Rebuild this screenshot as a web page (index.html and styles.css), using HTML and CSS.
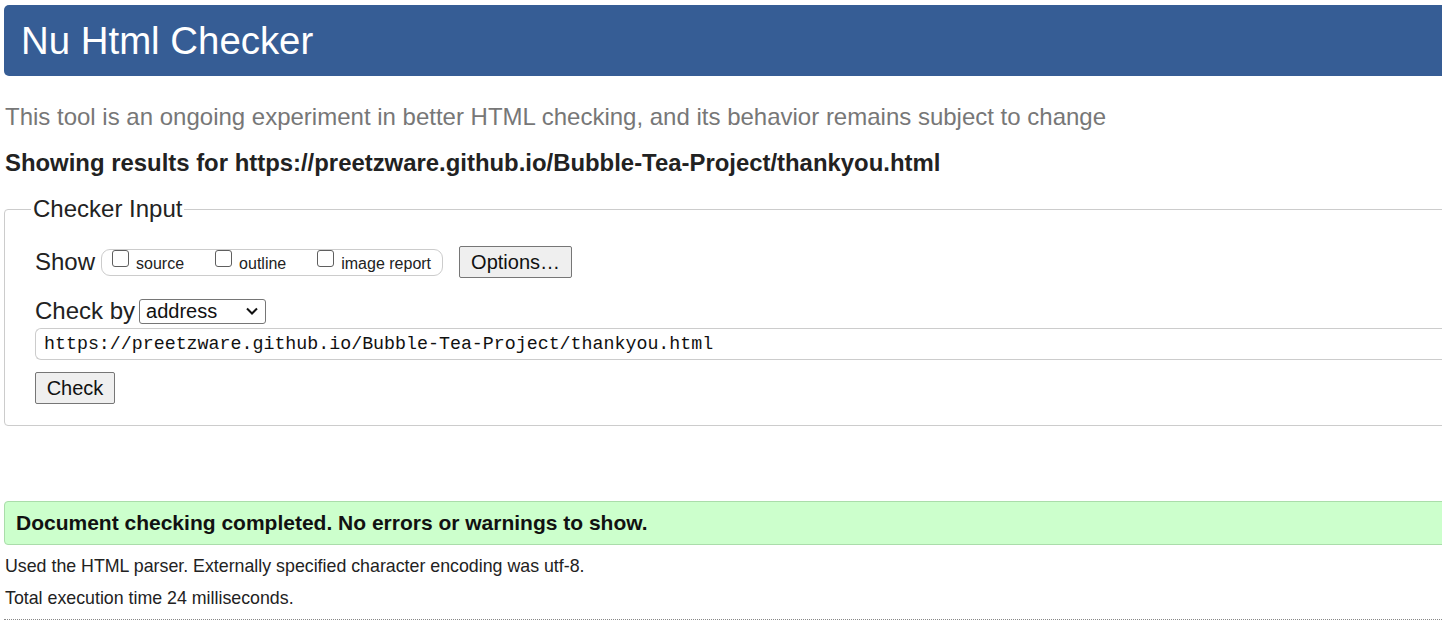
FILE: index.html
```html
<!DOCTYPE html>
<html>
<head>
<meta charset="utf-8">
<title>Nu Html Checker</title>
<link rel="stylesheet" href="styles.css">
</head>
<body>
<div class="page">
  <h1 class="banner">Nu Html Checker</h1>
  <p class="intro">This tool is an ongoing experiment in better HTML checking, and its behavior remains subject to change</p>
  <p class="showing">Showing results for https://preetzware.github.io/Bubble-Tea-Project/thankyou.html</p>
  <fieldset class="checker">
    <legend>Checker Input</legend>
    <div class="row show-row">
      <span class="lbl">Show</span>
      <div class="opts">
        <label><span class="cb"></span><span class="opt-text">source</span></label>
        <label><span class="cb"></span><span class="opt-text">outline</span></label>
        <label><span class="cb"></span><span class="opt-text">image report</span></label>
      </div>
      <span class="btn opt-btn">Options…</span>
    </div>
    <div class="row by-row">
      <span class="lbl">Check by</span>
      <span class="select">address<svg width="14" height="10" viewBox="0 0 14 10"><path d="M2 2.5 L7 7.5 L12 2.5" fill="none" stroke="#111" stroke-width="2"/></svg></span>
    </div>
    <div class="url">https://preetzware.github.io/Bubble-Tea-Project/thankyou.html</div>
    <span class="btn check-btn">Check</span>
  </fieldset>
  <div class="success">Document checking completed. No errors or warnings to show.</div>
  <p class="meta">Used the HTML parser. Externally specified character encoding was utf-8.</p>
  <p class="meta">Total execution time 24 milliseconds.</p>
  <div class="dots"></div>
</div>
</body>
</html>
```
FILE: styles.css
```css
html, body {
  margin: 0;
  padding: 0;
  background: #fff;
  overflow: hidden;
}
body {
  font-family: "Liberation Sans", Arial, sans-serif;
  color: #222;
}
.page {
  width: 1500px;
  padding: 5px 0 0 4px;
}
.banner {
  margin: 0;
  height: 71px;
  background: #365d95;
  color: #fff;
  font-weight: normal;
  font-size: 38.4px;
  line-height: 71px;
  padding-left: 17px;
  border-radius: 5px;
}
.intro {
  margin: 26px 0 0 1px;
  font-size: 24px;
  line-height: 30px;
  color: #777;
}
.showing {
  margin: 16px 0 0 1px;
  font-size: 23.9px;
  line-height: 30px;
  font-weight: bold;
  color: #222;
}
.checker {
  margin: 18px 0 0 0;
  border: 1px solid #ccc;
  border-radius: 4px;
  padding: 0 0 21px 30px;
}
.checker legend {
  font-size: 24px;
  color: #222;
  padding: 0 2px;
  margin-left: -4px;
  line-height: 26px;
}
.row {
  display: flex;
  align-items: center;
}
.lbl {
  font-size: 24px;
  line-height: 26px;
  color: #222;
}
.show-row {
  margin-top: 24px;
}
.opts {
  display: flex;
  align-items: flex-start;
  margin-left: 6px;
  height: 27px;
  box-sizing: border-box;
  border: 1px solid #ccc;
  border-radius: 9px;
  padding: 0 11px 0 10px;
}
.opts label {
  display: flex;
  align-items: flex-start;
  font-size: 16px;
  line-height: 18px;
  color: #222;
  margin-right: 31px;
}
.opts label:last-child {
  margin-right: 0;
}
.cb {
  display: inline-block;
  width: 17px;
  height: 17px;
  box-sizing: border-box;
  border: 1px solid #5f5f5f;
  border-radius: 3px;
  margin-right: 7px;
  background: #fff;
}
.opt-text {
  margin-top: 5px;
}
.btn {
  display: inline-block;
  box-sizing: border-box;
  background: #efefef;
  border: 1px solid #767676;
  border-radius: 2px;
  font-size: 20px;
  color: #111;
  text-align: center;
}
.opt-btn {
  margin-left: 16px;
  width: 113px;
  height: 32px;
  line-height: 30px;
}
.by-row {
  margin-top: 20px;
}
.select {
  display: inline-flex;
  align-items: center;
  justify-content: space-between;
  margin-left: 4px;
  width: 127px;
  height: 25px;
  box-sizing: border-box;
  border: 1px solid #767676;
  border-radius: 3px;
  padding: 0 6px 0 6px;
  font-size: 20px;
  color: #111;
}
.url {
  margin-top: 4px;
  height: 32px;
  box-sizing: border-box;
  border: 1px solid #ccc;
  border-right: none;
  border-radius: 6px 0 0 6px;
  padding-left: 8px;
  font-family: "Liberation Mono", "DejaVu Sans Mono", monospace;
  font-size: 18.3px;
  line-height: 30px;
  color: #111;
}
.check-btn {
  margin-top: 12px;
  width: 80px;
  height: 32px;
  line-height: 30px;
}
.success {
  margin-top: 75px;
  height: 44px;
  box-sizing: border-box;
  background: #ccffcc;
  border: 1px solid #aaddaa;
  border-radius: 4px;
  padding-left: 11px;
  font-size: 21px;
  font-weight: bold;
  line-height: 42px;
  color: #111;
}
.meta {
  margin: 0;
  margin-left: 1px;
  font-size: 17.8px;
  line-height: 20px;
  color: #222;
}
.success + .meta {
  margin-top: 11px;
}
.meta + .meta {
  margin-top: 12px;
}
.dots {
  margin-top: 11px;
  border-top: 1px dotted #888;
}
```
